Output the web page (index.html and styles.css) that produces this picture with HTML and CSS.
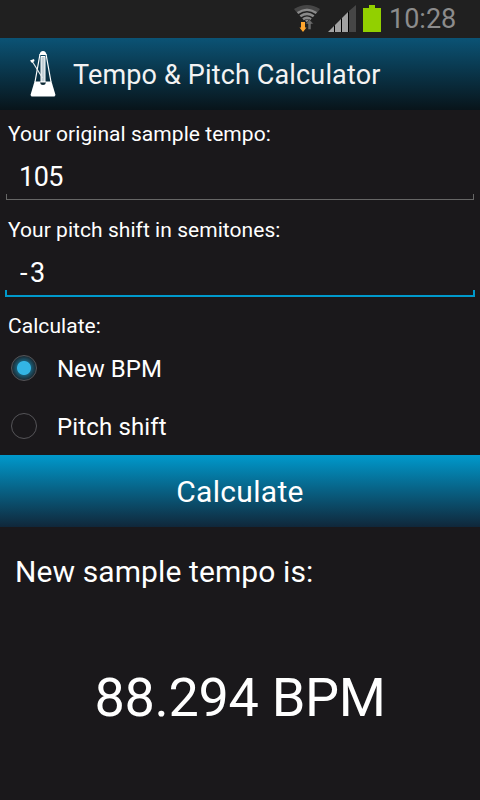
FILE: index.html
```html
<!DOCTYPE html>
<html lang="en">
<head>
  <meta charset="UTF-8">
  <meta name="viewport" content="width=device-width, initial-scale=1.0">
  <title>Tempo &amp; Pitch Calculator</title>
  <link rel="stylesheet" href="styles.css">
</head>
<body>
  <div class="status-bar">
    <svg class="wifi" width="26" height="28" viewBox="0 0 26 28">
      <path d="M0 4 Q13 -4 26 4 L23.500 7.200 Q13 0 2.500 7.200Z" fill="#464646"/>
      <g fill="none" stroke="#8a8a8a" stroke-width="2.600">
        <path d="M3.500 8 Q13 1.500 22.500 8"/>
        <path d="M6.300 11.300 Q13 6.500 19.700 11.300"/>
        <path d="M9 14.300 Q13 11.500 17 14.300"/>
      </g>
      <path d="M11 15.500 L13 14.500 L15 15.500 L13 17.500Z" fill="#8a8a8a"/>
      <path d="M7 17h4v5.500h1.500l-3.500 4.500-3.500-4.500h1.500z" fill="#ffa52e"/>
      <path d="M15.500 14.500l4 4.500h-2.500v5.500h-3v-5.500h-2.500z" fill="#6a6a6a" stroke="#202020" stroke-width=".5"/>
    </svg>
    <svg class="signal" width="28" height="27" viewBox="0 0 28 27">
      <path d="M0 27L6 21V27Z" fill="#a2a2a2"/>
      <path d="M7 27V20L13 14V27Z" fill="#a2a2a2"/>
      <path d="M14 27V13L20 7V27Z" fill="#a2a2a2"/>
      <path d="M21 27V6L28 0V27Z" fill="#464646"/>
      <path d="M6.500 21V27M13.500 14V27M20.500 7V27" stroke="#000"/>
    </svg>
    <svg class="battery" width="18" height="27" viewBox="0 0 18 27">
      <path d="M6 0H12V3H18V27H0V3H6Z" fill="#92d000"/>
    </svg>
    <span class="clock">10:28</span>
  </div>

  <header class="action-bar">
    <svg class="logo" width="26" height="47" viewBox="0 0 26 47">
      <path d="M10 3L5 31M16 3L21 31" stroke="#fff" stroke-width="1.200"/>
      <path d="M9.500 4Q10 0 13 0T16.500 4Z" fill="#fff"/>
      <path d="M11 5.500H15V31H11Z" fill="#c3d0d6" stroke="#fff"/>
      <path d="M2 10L12.500 27" stroke="#e5eaec" stroke-width="1.200"/>
      <path d="M0 9.500L4 8L4.500 10L2 12Z" fill="#fff"/>
      <path d="M4.500 30.500H21.500L25.500 44L24.500 45.500H1.500L.5 44Z" fill="#fff"/>
      <path d="M10 31.500H16Q15.500 34 13 34T10 31.500Z" fill="#0a2734"/>
    </svg>
    <h1>Tempo &amp; Pitch Calculator</h1>
  </header>

  <main>
    <label class="label" for="tempo">Your original sample tempo:</label>
    <div class="field">
      <input type="text" id="tempo" value="105">
    </div>

    <label class="label" for="pitch">Your pitch shift in semitones:</label>
    <div class="field active">
      <input type="text" id="pitch" value="-3">
    </div>

    <p class="label mode-label">Calculate:</p>
    <label class="option">
      <input type="radio" name="mode" checked>
      <span>New BPM</span>
    </label>
    <label class="option">
      <input type="radio" name="mode">
      <span>Pitch shift</span>
    </label>

    <button type="button" class="calculate">Calculate</button>

    <p class="result-label">New sample tempo is:</p>
    <p class="result">88.294 BPM</p>
  </main>
</body>
</html>
```

FILE: styles.css
```css
* {
  box-sizing: border-box;
}

body {
  margin: 0;
  height: 800px;
  overflow: hidden;
  background-color: #1a181b;
  color: #fff;
  font-family: Roboto, "Liberation Sans", sans-serif;
}

p,
h1 {
  margin: 0;
  font-weight: 400;
}

input,
button {
  margin: 0;
  color: inherit;
  font-family: inherit;
}

.status-bar {
  display: flex;
  height: 38px;
  padding: 5px 0 0 294px;
  background-color: #202020;
}

.signal {
  margin-left: 8px;
}

.battery {
  margin-left: 7px;
}

.clock {
  margin: -2px 0 0 8px;
  color: #8c8c8c;
  font-size: 27px;
  line-height: 32px;
}

.action-bar {
  display: flex;
  height: 72px;
  padding: 13px 0 0 30px;
  background: linear-gradient(#0b5375, #08141a);
}

h1 {
  margin-left: 17px;
  color: #f3f3f3;
  font-size: 27px;
  line-height: 48px;
  letter-spacing: 0.15px;
  white-space: nowrap;
}

.label {
  display: block;
  height: 48px;
  padding-left: 8px;
  font-size: 21px;
  line-height: 48px;
  letter-spacing: 0.05px;
}

.mode-label {
  height: 37px;
}

.field {
  height: 48px;
  padding: 0 6px;
}

.field input {
  display: block;
  width: 468px;
  height: 42px;
  padding: 0 0 5px 13px;
  border: 0;
  outline: 0;
  font-size: 27px;
  letter-spacing: -0.5px;
  /* underline with short ticks at both ends */
  background:
    linear-gradient(#666, #666) left bottom / 1px 6px no-repeat,
    linear-gradient(#666, #666) right bottom / 1px 6px no-repeat,
    linear-gradient(#666, #666) left bottom / 100% 1px no-repeat;
}

.active {
  padding: 0 5px;
}

.active input {
  width: 470px;
  height: 43px;
  padding: 0 0 6px 15px;
  letter-spacing: 2.5px;
  background:
    linear-gradient(#0099cc, #0099cc) left bottom / 2px 7px no-repeat,
    linear-gradient(#0099cc, #0099cc) right bottom / 2px 7px no-repeat,
    linear-gradient(#0099cc, #0099cc) left bottom / 100% 2px no-repeat;
}

.option {
  display: flex;
  align-items: center;
  height: 58px;
  padding-left: 11px;
  font-size: 24px;
}

.option span {
  padding-top: 2px;
}

.option + .option span {
  letter-spacing: 0.15px;
}

.option input {
  width: 26px;
  height: 26px;
  margin-right: 20px;
  appearance: none;
  border: 1px solid #555458;
  border-radius: 50%;
}

.option input:checked {
  background: radial-gradient(circle, #33b5e5 6.500px, #1b5a72 7.500px, #1b3440 11px, #1b252b 13px);
}

.calculate {
  display: block;
  width: 100%;
  height: 72px;
  padding: 0;
  border: 0;
  background: linear-gradient(#0099cc, #10273a);
  font-size: 30px;
  letter-spacing: 0.3px;
}

.result-label {
  padding-left: 15px;
  font-size: 30px;
  line-height: 90px;
  letter-spacing: 0.1px;
}

.result {
  padding-top: 46px;
  font-size: 54px;
  line-height: 70px;
  letter-spacing: -0.3px;
  text-align: center;
}
```
